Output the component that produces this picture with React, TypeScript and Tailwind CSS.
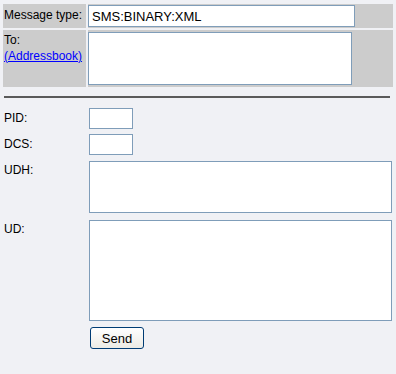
import React from "react";

export default function App() {
  const box = "border border-[#7f9db9] bg-white";
  return (
    <div className="min-h-screen w-full bg-[#f0f1f5] font-['Liberation_Sans',Arial,sans-serif] text-[12px] text-black leading-[14px]">
      <div className="pl-[3px] pr-[3px] pt-[4px]">
        <div className="grid grid-cols-[83px_305px] gap-[2px]">
          <div className="bg-[#cccccc] h-[24px] pl-[1px] pt-[4px]">Message type:</div>
          <div className="bg-[#cccccc] h-[24px] pt-[1px]">
            <div className={`${box} w-[267px] h-[22px] pl-[3px] pt-[3px] text-[13px] leading-[15px]`}>SMS:BINARY:XML</div>
          </div>
          <div className="bg-[#cccccc] h-[57px] pl-[1px] pt-[3px]">
            <div>To:</div>
            <a href="#" className="text-[#0000ff] underline block mt-[2px]">(Addressbook)</a>
          </div>
          <div className="bg-[#cccccc] h-[57px] pt-[2px]">
            <div className={`${box} w-[264px] h-[53px]`} />
          </div>
        </div>
      </div>
      <div className="ml-[4px] mt-[9px] w-[386px] h-[2px] bg-[#5a5a5a]" />
      <div className="pl-[4px] pt-[10px] flex flex-col">
        <div className="flex items-start">
          <div className="w-[85px] pt-[3px]">PID:</div>
          <div className={`${box} w-[44px] h-[21px]`} />
        </div>
        <div className="flex items-start mt-[5px]">
          <div className="w-[85px] pt-[3px]">DCS:</div>
          <div className={`${box} w-[44px] h-[21px]`} />
        </div>
        <div className="flex items-start mt-[6px]">
          <div className="w-[85px] pt-[2px]">UDH:</div>
          <div className={`${box} w-[303px] h-[52px]`} />
        </div>
        <div className="flex items-start mt-[7px]">
          <div className="w-[85px] pt-[2px]">UD:</div>
          <div className={`${box} w-[303px] h-[101px]`} />
        </div>
        <div className="flex items-start mt-[6px]">
          <div className="w-[86px]" />
          <button className="w-[54px] h-[22px] rounded-[3px] border border-[#003c74] bg-gradient-to-b from-[#ffffff] to-[#ecebe5] text-[13px] leading-[15px]">
            Send
          </button>
        </div>
      </div>
    </div>
  );
}
